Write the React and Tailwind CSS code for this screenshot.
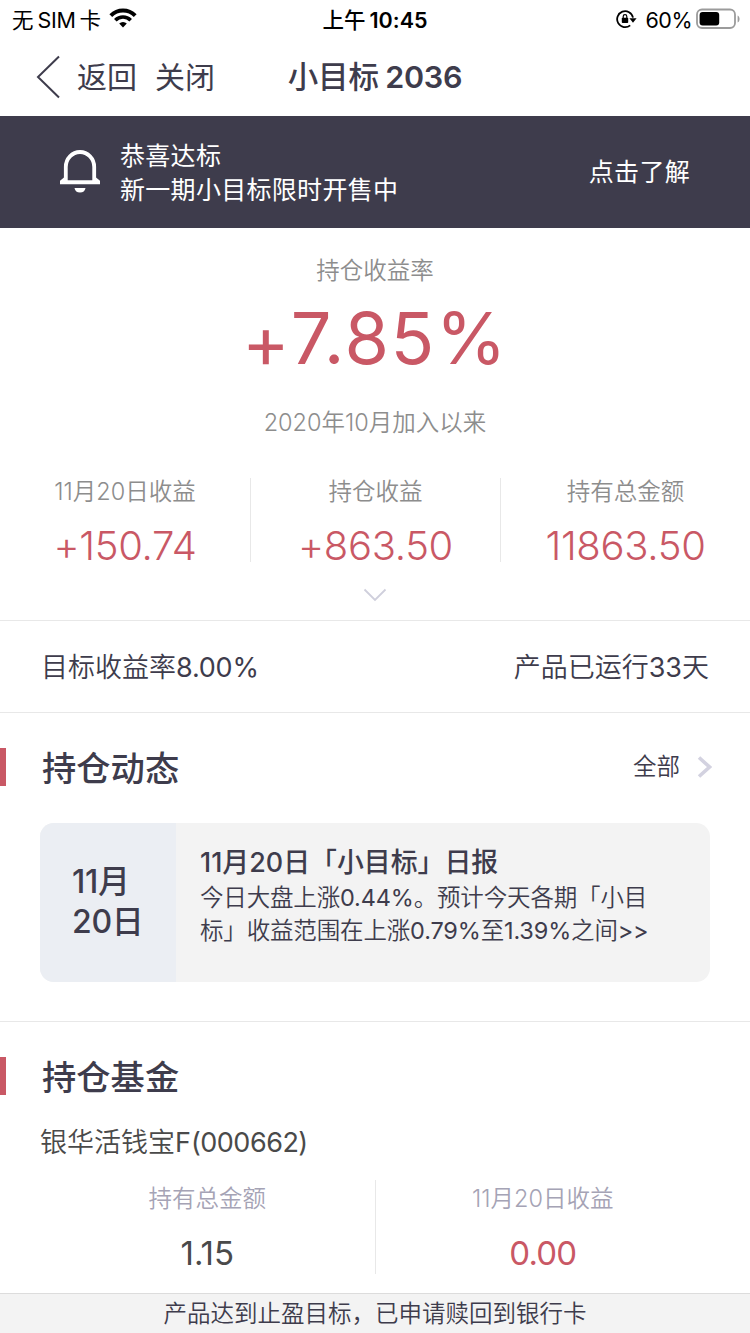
import React from "react";

const stats = [
  { label: "11月20日收益", value: "+150.74" },
  { label: "持仓收益", value: "+863.50" },
  { label: "持有总金额", value: "11863.50" },
];

function StatusBar() {
  return (
    <div className="grid h-[38px] grid-cols-3 items-center text-[21.5px] leading-[36px] text-black">
      <div className="flex items-center pl-3">
        <span className="pt-px">无</span>
        <span className="ml-1 pt-px tracking-[-0.3px]">SIM</span>
        <span className="ml-1 pt-px">卡</span>
        <svg width="28" height="20" viewBox="0 0 28 20" className="mb-0.5 ml-2" fill="none">
          <path d="M1.8 7.6a17.4 17.4 0 0 1 24.4 0" stroke="#000" strokeWidth="4" />
          <path d="M6.3 12.2a11 11 0 0 1 15.4 0" stroke="#000" strokeWidth="3.6" />
          <path d="M14 19.6l-3.8-4a5.4 5.4 0 0 1 7.6 0z" fill="#000" />
        </svg>
      </div>
      <div className="flex justify-center pt-px font-medium">
        <span>上午</span>
        <span className="ml-1 font-semibold">10:45</span>
      </div>
      <div className="flex items-center justify-end pr-[9px]">
        <svg width="21" height="20" viewBox="0 0 21 20" className="mr-2" fill="none">
          <path d="M14.2 16.4A8 8 0 1 1 17 8.6" stroke="#000" strokeWidth="1.8" />
          <path d="M13.4 9.2h7.2l-3.6 4.6z" fill="#000" />
          <rect x="5.8" y="8.8" width="6.4" height="5.2" rx="0.8" fill="#000" />
          <path d="M7.2 9V7.4a1.8 1.8 0 0 1 3.6 0V9" stroke="#000" strokeWidth="1.2" />
        </svg>
        <span className="pt-px tracking-[-0.5px]">60%</span>
        <svg width="45" height="22" viewBox="0 0 45 22" className="ml-1" fill="none">
          <rect x="1" y="1.5" width="38" height="18.5" rx="5" stroke="#9b9b9b" strokeWidth="1.8" />
          <rect x="3.6" y="4" width="19.6" height="13.6" rx="3" fill="#000" />
          <path d="M41.6 7.4c2.6 1 2.6 6 0 7z" fill="#9b9b9b" />
        </svg>
      </div>
    </div>
  );
}

function NavBar() {
  return (
    <div className="grid h-[78px] grid-cols-3 items-center text-[#3e3c4c]">
      <div className="flex items-center pl-9 text-[30px] leading-[76px]">
        <svg width="24" height="44" viewBox="0 0 24 44" fill="none">
          <path d="M23 1.5L2 22l21 20.5" stroke="#3e3c4c" strokeWidth="2" />
        </svg>
        <span className="ml-[17px]">返回</span>
        <span className="ml-[18px]">关闭</span>
      </div>
      <div className="flex justify-center text-[30.5px] leading-[76px] font-medium whitespace-nowrap">
        <span>小目标</span>
        <span className="ml-[6px] font-semibold tracking-[-0.2px]">2036</span>
      </div>
    </div>
  );
}

function Banner() {
  return (
    <div className="flex h-28 items-center bg-[#3e3c4c] px-[60px] font-['Inter','Noto_Sans_CJK_SC',sans-serif] text-[25px] text-white">
      <svg width="40" height="44" viewBox="0 0 40 44" fill="none">
        <path d="M5.8 31V17a14.2 15 0 0 1 28.4 0v14" stroke="#fff" strokeWidth="3.8" />
        <path d="M4 27.5L0 30.8v3.4h40v-3.4l-4-3.3v2.7H4z" fill="#fff" />
        <path d="M14.5 38h11a5.6 5.6 0 0 1-11 0z" fill="#fff" />
      </svg>
      <div className="ml-5 grow pt-px leading-[34px] tracking-[0.3px]">
        <p>恭喜达标</p>
        <p>新一期小目标限时开售中</p>
      </div>
      <span className="pt-px tracking-[0.3px]">点击了解</span>
    </div>
  );
}

function Overview() {
  return (
    <div className="flex h-[393px] flex-col items-center border-b border-[#e8e8e8] pt-[27px] text-[23.5px] font-[350] text-[#8d8d8d]">
      <p className="leading-8">持仓收益率</p>
      <p className="mt-[11px] flex h-20 text-[72px] leading-20 font-normal text-[#c95865]">
        <span className="pt-1 tracking-[1px]">+</span>
        <span className="tracking-[1.5px]">7.85%</span>
      </p>
      <p className="mt-[29px] leading-8">2020年10月加入以来</p>
      <div className="mt-[37px] flex w-full">
        {stats.map((s, i) => (
          <div key={s.label} className="flex flex-1">
            {i > 0 && <div className="mt-0.5 h-[84px] w-px bg-[#e8e8e8]" />}
            <div className="flex-1 text-center whitespace-nowrap">
              <p className="leading-8">{s.label}</p>
              <p className="mt-[14px] text-[40px] leading-12 font-light tracking-[-0.3px] text-[#c95865]">
                {s.value}
              </p>
            </div>
          </div>
        ))}
      </div>
      <svg width="24" height="14" viewBox="0 0 24 14" className="mt-[18px]" fill="none">
        <path d="M1.5 1.5L12 12 22.5 1.5" stroke="#cfcfdc" strokeWidth="1.8" />
      </svg>
    </div>
  );
}

function Heading({ title, children }) {
  return (
    <div className="flex h-[38px] items-center border-l-6 border-[#c95865] pr-[38px] pl-9 text-[#3e3c4c]">
      <h2 className="grow pt-1 text-[34.3px] leading-[34px] font-medium">{title}</h2>
      {children}
    </div>
  );
}

function News() {
  return (
    <div className="h-[309px] border-b border-[#e8e8e8] pt-[35px]">
      <Heading title="持仓动态">
        <span className="text-[23.5px] font-[350]">全部</span>
        <svg width="15" height="22" viewBox="0 0 15 22" className="ml-[17px]" fill="none">
          <path d="M2 1.5L12.5 11 2 20.5" stroke="#d3d2e0" strokeWidth="3.6" />
        </svg>
      </Heading>
      <div className="mx-10 mt-[37px] flex h-[159px] overflow-hidden rounded-[14px] bg-[#f3f3f3] text-[#3e3c4c]">
        <div className="w-34 bg-[#ebeef3] pt-[39px] pl-8 text-[32px] leading-10 font-medium tracking-[-0.3px]">
          <p>11月</p>
          <p>20日</p>
        </div>
        <div className="pt-[22px] pl-6 whitespace-nowrap">
          <p className="text-[26.9px] leading-[34px] font-medium">11月20日「小目标」日报</p>
          <div className="mt-0.5 font-['Inter','Noto_Sans_CJK_SC_DemiLight','Noto_Sans_CJK_SC',sans-serif] text-[23.5px] leading-[33px] tracking-[-0.16px]">
            <p>今日大盘上涨0.44%。预计今天各期「小目</p>
            <p>标」收益范围在上涨0.79%至1.39%之间&gt;&gt;</p>
          </div>
        </div>
      </div>
    </div>
  );
}

function Fund() {
  return (
    <div className="h-[271px] pt-[35px]">
      <Heading title="持仓基金" />
      <p className="mt-[30px] pl-10 font-['Inter','Noto_Sans_CJK_SC_DemiLight','Noto_Sans_CJK_SC',sans-serif] text-[27px] leading-9 text-[#4a4a4a]">
        银华活钱宝F<span className="tracking-[-0.5px]">(000662)</span>
      </p>
      <div className="mt-[19px] flex h-[94px] px-10 text-center text-[23.5px] font-[350] text-[#a5a3b5]">
        <div className="flex-1 pt-[3px]">
          <p className="leading-8">持有总金额</p>
          <p className="mt-[18px] text-[33px] leading-10 font-normal text-[#4a4a4a]">1.15</p>
        </div>
        <div className="w-px bg-[#e8e8e8]" />
        <div className="flex-1 pt-[3px]">
          <p className="leading-8">11月20日收益</p>
          <p className="mt-[18px] text-[33px] leading-10 font-normal tracking-[-0.8px] text-[#c95865]">0.00</p>
        </div>
      </div>
    </div>
  );
}

function App() {
  return (
    <div className="h-[1333px] w-[750px] overflow-hidden bg-white font-['Inter','Noto_Sans_CJK_SC',sans-serif] [font-feature-settings:'calt'_0]">
      <StatusBar />
      <NavBar />
      <Banner />
      <Overview />
      <div className="flex h-[92px] items-center justify-between border-b border-[#e8e8e8] px-[41px] pt-[3px] font-['Inter','Noto_Sans_CJK_SC_DemiLight','Noto_Sans_CJK_SC',sans-serif] text-[27px] text-[#3e3c4c]">
        <span>
          目标收益率<span className="tracking-[-0.2px]">8.00%</span>
        </span>
        <span>产品已运行33天</span>
      </div>
      <News />
      <Fund />
      {/* redemption notice */}
      <div className="h-10 border-t border-[#dcdcdc] bg-[#f3f3f3] text-center text-[23.5px] leading-[40px] font-[350] text-[#3e3c4c]">
        产品达到止盈目标，已申请赎回到银行卡
      </div>
    </div>
  );
}

export default App;
